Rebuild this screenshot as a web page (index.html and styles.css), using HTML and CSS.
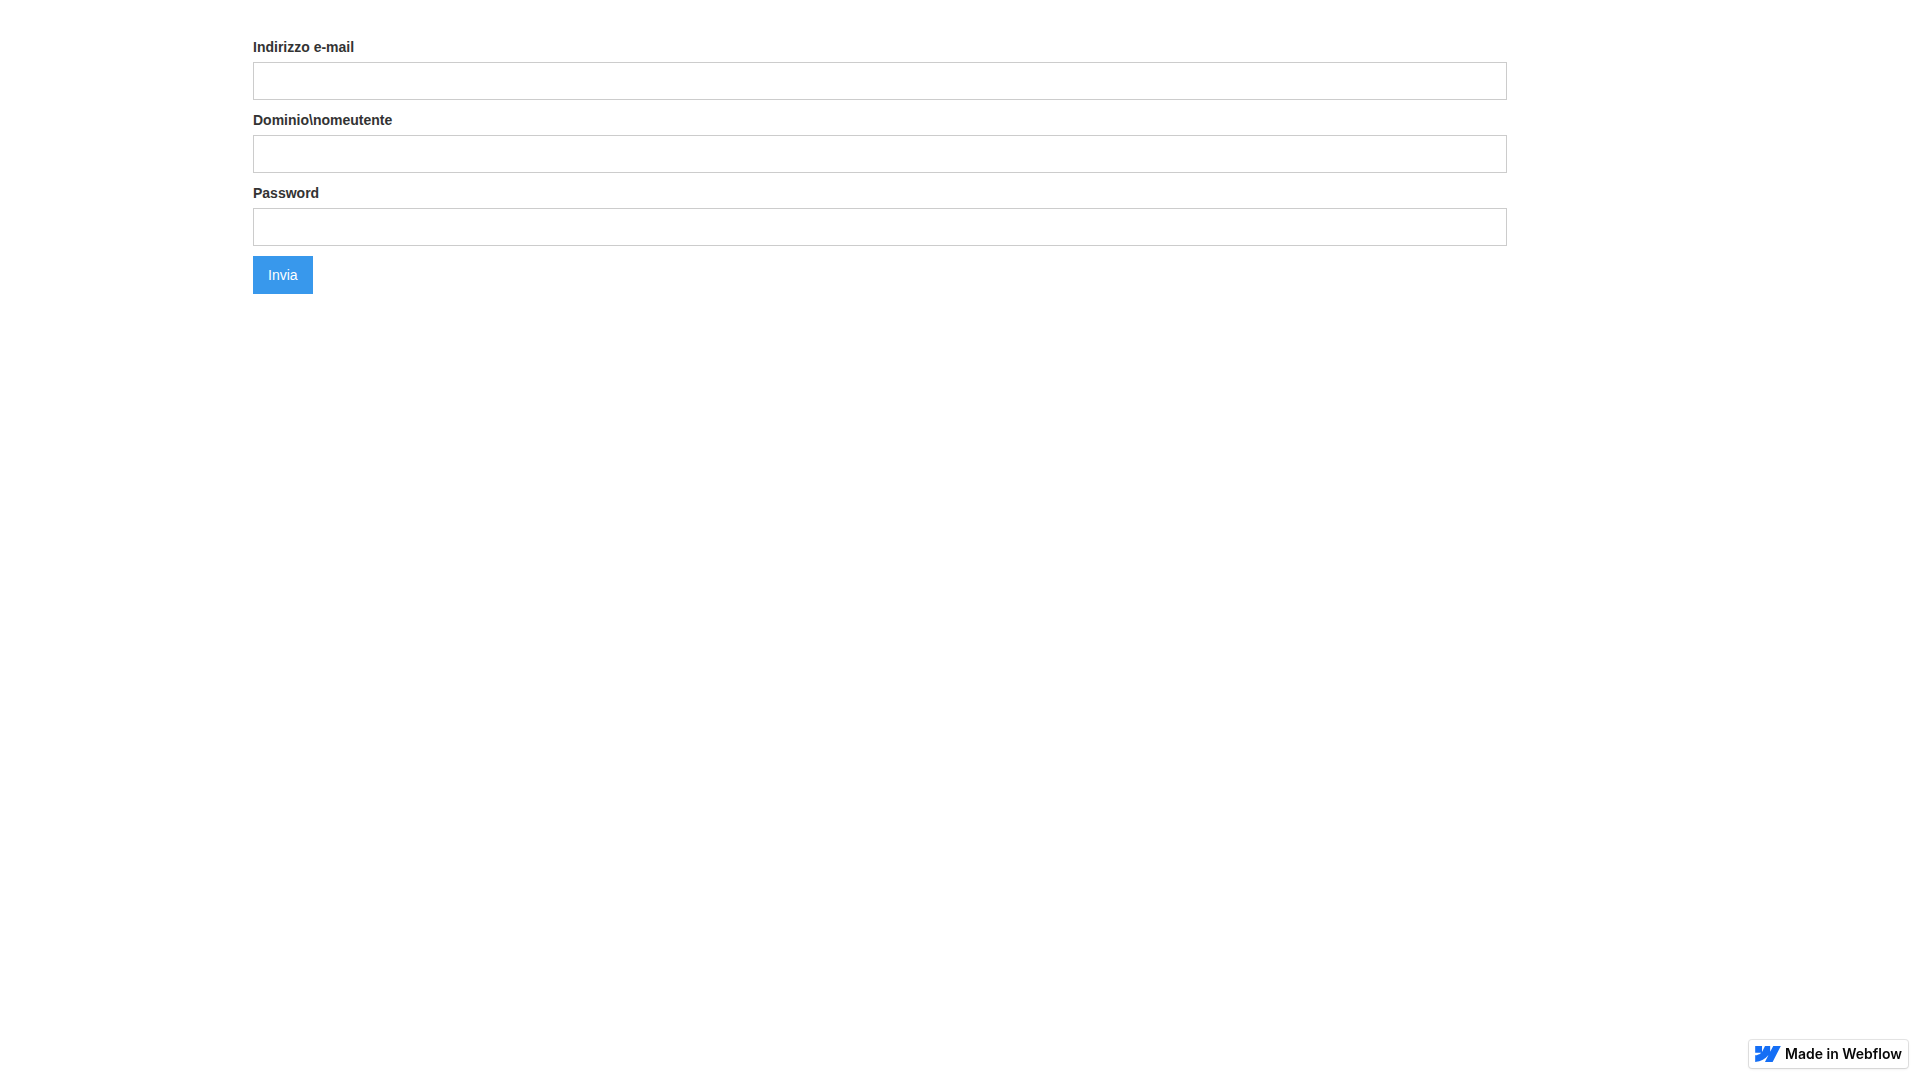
FILE: index.html
```html
<!DOCTYPE html>
<html lang="it">
<head>
  <meta charset="UTF-8">
  <title>Accesso</title>
  <meta name="viewport" content="width=device-width, initial-scale=1.0">
  <link rel="stylesheet" href="styles.css">
</head>
<body>

  <main class="form-block">
    <form class="form" method="post">
      <label for="email" class="form-label">Indirizzo e-mail</label>
      <input type="email" class="form-input" id="email" name="email" maxlength="256" required>

      <label for="username" class="form-label">Dominio\nomeutente</label>
      <input type="text" class="form-input" id="username" name="username" maxlength="256" required>

      <label for="password" class="form-label">Password</label>
      <input type="password" class="form-input" id="password" name="password" maxlength="256" required>

      <button type="submit" class="button">Invia</button>
    </form>
  </main>

  <a class="badge" href="https://webflow.com">
    <svg class="badge-logo" viewBox="0 0 1080 674" aria-hidden="true">
      <path fill="#146ef5" d="M1080 0L735.386 673.684H411.695L555.916 394.481H549.445C430.464 548.934 252.942 650.61 0 673.684V398.344C0 398.344 161.813 388.787 256.938 288.776H0V0H288.771V237.515L295.252 237.489L413.254 0H631.644V236.009L638.126 235.999L760.555 0H1080Z"/>
    </svg>
    <span class="badge-text">Made in Webflow</span>
  </a>

</body>
</html>
```
FILE: styles.css
```css
* {
  box-sizing: border-box;
}

body {
  margin: 0;
  font-family: Arial, "Liberation Sans", sans-serif;
  font-size: 14px;
  line-height: 20px;
  color: #333;
  background-color: #fff;
}

.form-block {
  margin: 37px 413px 15px 253px;
}

.form-label {
  display: block;
  margin-bottom: 5px;
  font-weight: bold;
}

.form-input {
  display: block;
  width: 100%;
  height: 38px;
  margin-bottom: 10px;
  padding: 8px 12px;
  font-family: inherit;
  font-size: 14px;
  color: #333;
  background-color: #fff;
  border: 1px solid #ccc;
  border-radius: 0;
}

.form-input:focus {
  border-color: #3898ec;
  outline: 0;
}

.button {
  display: inline-block;
  padding: 9px 15px;
  font-family: inherit;
  font-size: 14px;
  line-height: 20px;
  color: #fff;
  background-color: #3898ec;
  border: 0;
  border-radius: 0;
  cursor: pointer;
}

/* badge in the corner of the window */
.badge {
  position: fixed;
  right: 12px;
  bottom: 12px;
  display: flex;
  align-items: center;
  gap: 4px;
  padding: 6px;
  color: #080808;
  background-color: #fff;
  border-radius: 3px;
  box-shadow: 0 0 0 1px rgba(0, 0, 0, 0.1), 0 1px 3px rgba(0, 0, 0, 0.1);
  text-decoration: none;
}

.badge-logo {
  display: block;
  width: 26px;
  height: 16px;
}

.badge-text {
  font-family: Inter, sans-serif;
  font-size: 14px;
  font-weight: 600;
  line-height: 16px;
  white-space: nowrap;
}
```
